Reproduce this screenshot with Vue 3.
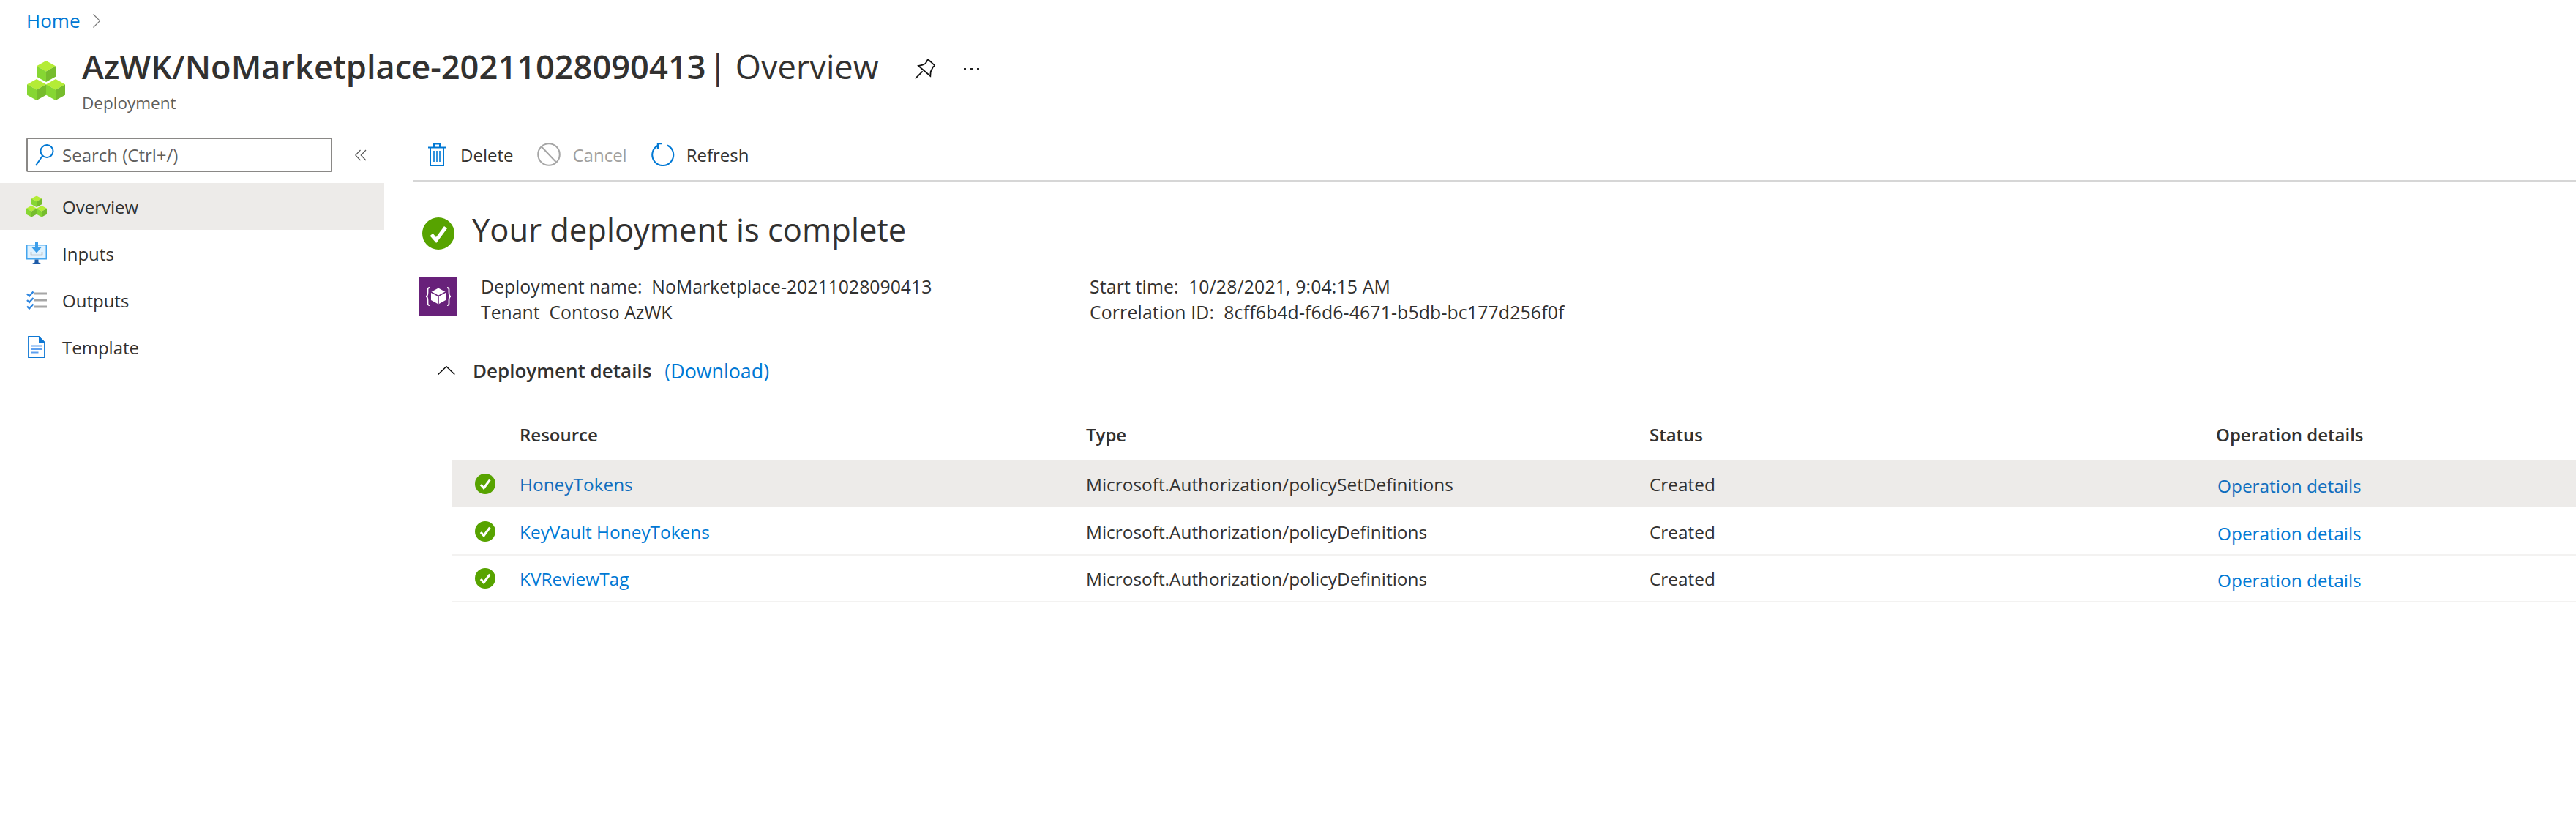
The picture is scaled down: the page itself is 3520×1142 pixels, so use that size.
<script setup>
const navItems = [
  { label: 'Overview', icon: 'cubes', active: true },
  { label: 'Inputs', icon: 'inputs' },
  { label: 'Outputs', icon: 'outputs' },
  { label: 'Template', icon: 'template' },
];

const resources = [
  { name: 'HoneyTokens', type: 'Microsoft.Authorization/policySetDefinitions', status: 'Created', hover: true },
  { name: 'KeyVault HoneyTokens', type: 'Microsoft.Authorization/policyDefinitions', status: 'Created' },
  { name: 'KVReviewTag', type: 'Microsoft.Authorization/policyDefinitions', status: 'Created' },
];
</script>

<template>
  <div class="page">
    <svg class="defs" width="0" height="0" aria-hidden="true">
      <defs>
        <symbol id="ok" viewBox="0 0 44 44">
          <circle cx="22" cy="22" r="22" fill="#57a300" />
          <path d="M12.500 23.500 19 31 32 13.500" fill="none" stroke="#fff" stroke-width="5" />
        </symbol>
        <symbol id="cube" viewBox="0 0 26 29">
          <path d="M13 0 26 7.200 13 14.500 0 7.200Z" fill="#b4ec36" />
          <path d="M0 7.200 13 14.500V29L0 21.800Z" fill="#86d633" />
          <path d="M26 7.200 13 14.500V29L26 21.800Z" fill="#76bc2d" />
        </symbol>
        <symbol id="cubes" viewBox="0 0 52 54">
          <use href="#cube" x="13" y="0" width="26" height="29" />
          <use href="#cube" x="0" y="25" width="26" height="29" />
          <use href="#cube" x="26" y="25" width="26" height="29" />
        </symbol>
        <symbol id="inputs" viewBox="0 0 28 30">
          <rect x="0.750" y="3.750" width="26.500" height="19" fill="#e0f2ff" stroke="#45a5ee" stroke-width="1.500" />
          <path d="M12 0h4v7h4.500L14 14.500 7.500 7H12Z" fill="#3c9eea" />
          <path d="M6.500 13v4.500h15V13" fill="none" stroke="#a6a6a6" stroke-width="1.500" />
          <path d="M11.500 23.500h5v4l3 1v1.500H8.500v-1.500l3-1Z" fill="#1d5ba8" />
        </symbol>
        <symbol id="outputs" viewBox="0 0 28 25">
          <path d="M1 3.500 4 6.500 9.500 .5M1 12 4 15 9.500 9M1 20.500 4 23.500 9.500 17.500" fill="none" stroke="#2e86e0" stroke-width="2.400" />
          <path d="M11 3h17M11 12h17M11 21h17" stroke="#a6a6a6" stroke-width="3" />
        </symbol>
        <symbol id="template" viewBox="0 0 24 30">
          <path d="M1 1H15L23 9V29H1Z" fill="#fff" stroke="#0f78d4" stroke-width="1.800" />
          <path d="M15 0 24 9H15Z" fill="#0f78d4" />
          <path d="M4.500 13.500h15M4.500 18h15M4.500 22.500h10" stroke="#5ea0ef" stroke-width="2" />
        </symbol>
      </defs>
    </svg>

    <nav class="crumbs">
      <a class="crumb-link">Home</a>
      <svg class="crumb-chevron" viewBox="0 0 10 19"><path d="M.5.500 9.500 9.500.5 18.500" fill="none" stroke="#777" stroke-width="1.200" /></svg>
    </nav>

    <header class="blade-head">
      <svg class="head-icon"><use href="#cubes" /></svg>
      <div class="head-text">
        <h1 class="head-title"><span class="head-name">AzWK/NoMarketplace-20211028090413</span><span class="head-section"> | Overview</span></h1>
        <div class="head-sub">Deployment</div>
      </div>
      <svg class="pin" viewBox="0 0 28 28">
        <path d="M18 1 27.500 9.700 25 11.300 21.700 18 21.300 24 5 10 10.700 8.700 14.700 6.700Z" fill="none" stroke="#111" stroke-width="1.800" />
        <path d="M10.700 17.300 .7 27.300" fill="none" stroke="#111" stroke-width="1.800" />
      </svg>
      <div class="more"><i></i><i></i><i></i></div>
    </header>

    <div class="blade-body">
      <aside class="side">
        <div class="search-row">
          <div class="search">
            <svg class="search-icon" viewBox="0 0 26 32">
              <circle cx="16" cy="10.500" r="8.500" fill="none" stroke="#0078d4" stroke-width="2" />
              <path d="M10 17 1 30" stroke="#0078d4" stroke-width="2" />
            </svg>
            <span>Search (Ctrl+/)</span>
          </div>
          <svg class="collapse" viewBox="0 0 16 16">
            <path d="M7.500 1 .8 8l6.700 7M15 1 8.300 8l6.700 7" fill="none" stroke="#555" stroke-width="1.200" />
          </svg>
        </div>
        <div v-for="item in navItems" :key="item.label" class="nav-item" :class="{ active: item.active }">
          <span class="nav-icon"><svg :class="'ic-' + item.icon"><use :href="'#' + item.icon" /></svg></span>
          <span>{{ item.label }}</span>
        </div>
      </aside>

      <main class="main">
        <div class="toolbar">
          <button class="tool">
            <svg class="tool-icon trash" viewBox="0 0 24 32">
              <path d="M0 6.500H24M8 6V1.500H16V6M3 6.500V31H21V6.500" fill="none" stroke="#0078d4" stroke-width="2" />
              <path d="M8 11V26M12 11V26M16 11V26" stroke="#0078d4" stroke-width="1.600" />
            </svg>
            <span>Delete</span>
          </button>
          <button class="tool disabled">
            <svg class="tool-icon" viewBox="0 0 32 32">
              <circle cx="16" cy="16" r="14.800" fill="none" stroke="#a6a6a6" stroke-width="2" />
              <path d="M6 5.500 26 26.500" stroke="#a6a6a6" stroke-width="2" />
            </svg>
            <span>Cancel</span>
          </button>
          <button class="tool">
            <svg class="tool-icon" viewBox="0 0 32 32">
              <path d="M22 3.500A14.500 14.500 0 1 1 9.500 3.500" fill="none" stroke="#0078d4" stroke-width="2" />
              <path d="M9 0H15M9 0V7" fill="none" stroke="#0078d4" stroke-width="2.400" transform="translate(0 1)" />
            </svg>
            <span>Refresh</span>
          </button>
        </div>

        <section class="content">
          <div class="status-head">
            <svg class="status-icon"><use href="#ok" /></svg>
            <h2>Your deployment is complete</h2>
          </div>

          <div class="summary">
            <div class="template-tile">
              <svg viewBox="0 0 52 52">
                <path d="M26 14.500 36 20V31L26 36.500 16 31V20Z" fill="#fff" />
                <path d="M16 20 26 25.500 36 20M26 25.500V36.500" fill="none" stroke="#68217a" stroke-width="1.500" />
                <path d="M14 14C11 14 11.500 16 11.500 20 11.500 24 11 26 9 26 11 26 11.500 28 11.500 32 11.500 36 11 38 14 38M38 14C41 14 40.500 16 40.500 20 40.500 24 41 26 43 26 41 26 40.500 28 40.500 32 40.500 36 41 38 38 38" fill="none" stroke="#fff" stroke-width="1.800" />
              </svg>
            </div>
            <div class="summary-col left">
              <div>Deployment name:&nbsp; NoMarketplace-20211028090413</div>
              <div>Tenant&nbsp; Contoso AzWK</div>
            </div>
            <div class="summary-col right">
              <div>Start time:&nbsp; 10/28/2021, 9:04:15 AM</div>
              <div>Correlation ID:&nbsp; 8cff6b4d-f6d6-4671-b5db-bc177d256f0f</div>
            </div>
          </div>

          <div class="details-head">
            <svg class="caret" viewBox="0 0 24 12"><path d="M.7 11.500 12 .7 23.300 11.500" fill="none" stroke="#111" stroke-width="1.500" /></svg>
            <strong>Deployment details</strong>
            <a class="link">(Download)</a>
          </div>

          <div class="grid">
            <div class="grid-row grid-header">
              <span></span>
              <span>Resource</span>
              <span>Type</span>
              <span>Status</span>
              <span>Operation details</span>
            </div>
            <div v-for="row in resources" :key="row.name" class="grid-row grid-item" :class="{ hover: row.hover }">
              <svg class="row-ok"><use href="#ok" /></svg>
              <a class="link">{{ row.name }}</a>
              <span>{{ row.type }}</span>
              <span>{{ row.status }}</span>
              <a class="link op-link">Operation details</a>
            </div>
          </div>
        </section>
      </main>
    </div>
  </div>
</template>

<style>
html, body {
  background: #fff;
}
</style>

<style scoped>
.page {
  width: 3520px;
  height: 1142px;
  overflow: hidden;
  font-family: "Open Sans", "Noto Sans", sans-serif;
  font-size: 24px;
  color: #323130;
}

.defs {
  position: absolute;
}

.crumbs {
  display: flex;
  align-items: center;
  gap: 18px;
  height: 56px;
  padding-left: 36px;
}

.crumb-link {
  color: #0078d4;
  font-size: 26px;
}

.crumb-chevron {
  width: 10px;
  height: 19px;
}

.blade-head {
  display: flex;
  align-items: flex-start;
  height: 124px;
  padding-left: 37px;
}

.head-icon {
  width: 52px;
  height: 54px;
  margin: 27px 23px 0 0;
}

.head-title {
  margin: 5px 0 0;
  font-size: 45.200px;
  line-height: 60px;
  font-weight: 400;
  width: 1116px;
  white-space: nowrap;
}

.head-name {
  font-weight: 600;
}

.head-section {
  margin-left: -8px;
  font-weight: 400;
}

.head-sub {
  margin-top: 5px;
  font-size: 22.500px;
  line-height: 30px;
  color: #605e5c;
}

.pin {
  width: 28px;
  height: 28px;
  margin: 24px 0 0 22px;
}

.more {
  display: flex;
  gap: 6px;
  margin: 37px 0 0 39px;
}

.more i {
  width: 3px;
  height: 3px;
  background: #222;
}

.blade-body {
  display: flex;
}

.side {
  width: 525px;
  flex-shrink: 0;
}

.search-row {
  display: flex;
  align-items: flex-start;
  height: 70px;
  padding: 8px 0 0 36px;
  box-sizing: border-box;
}

.search {
  display: flex;
  align-items: center;
  gap: 11px;
  width: 418px;
  height: 47px;
  box-sizing: border-box;
  border: 2px solid #8a8886;
  border-radius: 2px;
  padding-left: 10px;
  color: #605e5c;
}

.search-icon {
  width: 26px;
  height: 32px;
}

.collapse {
  width: 16px;
  height: 16px;
  margin: 16px 0 0 31px;
}

.nav-item {
  display: flex;
  align-items: center;
  height: 64px;
  padding-left: 36px;
}

.nav-item.active {
  background: #edebe9;
}

.nav-icon {
  display: flex;
  align-items: center;
  justify-content: center;
  width: 28px;
  height: 32px;
  margin-right: 21px;
}

.ic-cubes { width: 29px; height: 30px; }
.ic-inputs { width: 28px; height: 30px; }
.ic-outputs { width: 28px; height: 25px; }
.ic-template { width: 24px; height: 30px; }

.main {
  flex: 1;
  min-width: 0;
  padding-left: 40px;
}

.toolbar {
  display: flex;
  align-items: center;
  height: 68px;
  box-sizing: border-box;
  border-bottom: 2px solid #d6d6d6;
  padding: 0 0 4px 20px;
}

.tool {
  display: flex;
  align-items: center;
  gap: 16px;
  margin-right: 33px;
  padding: 0;
  border: 0;
  background: none;
  font: inherit;
  color: #323130;
}

.tool.disabled {
  color: #a19f9d;
}

.tool-icon {
  width: 32px;
  height: 32px;
}

.tool-icon.trash {
  width: 24px;
  margin-right: 4px;
}

.content {
  padding: 41px 0 0 8px;
}

.status-head {
  display: flex;
  align-items: center;
  gap: 24px;
  margin-left: 4px;
}

.status-icon {
  width: 44px;
  height: 44px;
}

.status-head h2 {
  margin: 0 0 10px;
  font-size: 43.500px;
  line-height: 50px;
  font-weight: 400;
}

.summary {
  display: flex;
  margin-top: 30px;
  font-size: 24.800px;
  line-height: 35px;
}

.template-tile {
  width: 52px;
  height: 52px;
  background: #68217a;
}

.template-tile svg {
  display: block;
}

.summary-col {
  margin-top: -5px;
}

.summary-col.left {
  width: 832px;
  margin-left: 32px;
}

.summary-col.right {
  letter-spacing: 0.150px;
}

.details-head {
  display: flex;
  align-items: center;
  height: 40px;
  margin: 42px 0 0 25px;
  font-size: 26.800px;
}

.caret {
  width: 24px;
  height: 12px;
  margin-right: 24px;
}

.details-head strong {
  font-size: 26px;
  font-weight: 600;
  margin-right: 18px;
}

.link {
  color: #0078d4;
}

.grid {
  margin: 35px 0 0 44px;
  font-size: 24.400px;
}

.grid-row {
  display: grid;
  grid-template-columns: 93px 774px 770px 774px 1fr;
  align-items: center;
}

.grid-header {
  height: 68px;
  box-sizing: border-box;
  padding-bottom: 3px;
  font-weight: 600;
  font-size: 24px;
}

.grid-item {
  height: 64px;
  box-sizing: border-box;
}

.grid-item:not(.hover) {
  border-bottom: 2px solid #f3f2f1;
}

.grid-item.hover {
  margin-bottom: 2px;
  background: #edebe9;
}

.grid-item.hover .link {
  color: #106ebe;
}

.row-ok {
  width: 28px;
  height: 28px;
  margin-left: 32px;
}

.op-link {
  padding: 4px 0 0 2px;
}
</style>
